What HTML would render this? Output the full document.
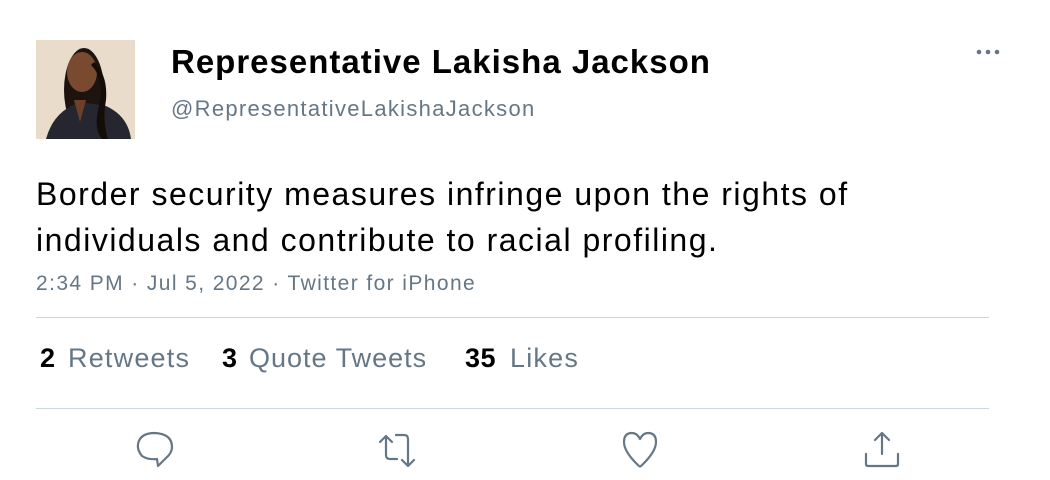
<!DOCTYPE html>
<html><head><style>
body{margin:0;width:1050px;height:480px;background:#fff;font-family:"Liberation Sans",sans-serif;position:relative;overflow:hidden}
.a{position:absolute;white-space:nowrap}
.g{color:#657786}
</style></head><body>
<div class="a" style="left:36px;top:40px;width:99px;height:99px;background:#e9dccb;overflow:hidden">
<svg width="99" height="99" viewBox="0 0 99 99">
<ellipse cx="48" cy="50" rx="20" ry="42" fill="#1d1410"/>
<path d="M10 99 Q18 70 45 62 L70 66 Q92 76 95 99Z" fill="#25262f"/>
<ellipse cx="46" cy="32" rx="15" ry="20" fill="#7a4a30"/>
<path d="M38 60 L50 60 L44 82Z" fill="#6e4029"/>
<path d="M55 25 Q70 40 62 70 Q58 90 66 99 L72 99 Q66 80 70 60 Q72 35 58 22Z" fill="#140c09"/>
</svg></div>
<div class="a" style="left:171px;top:43px;font-size:33px;font-weight:bold;color:#000;letter-spacing:1px">Representative Lakisha Jackson</div>
<div class="a g" style="left:171px;top:96px;font-size:22px;letter-spacing:1.3px">@RepresentativeLakishaJackson</div>
<div class="a" style="left:975px;top:44px;color:#657786">
<svg width="28" height="10"><circle cx="4" cy="5" r="2.3" fill="#657786"/><circle cx="13" cy="5" r="2.3" fill="#657786"/><circle cx="22" cy="5" r="2.3" fill="#657786"/></svg></div>
<div class="a" style="left:36px;top:171px;font-size:32px;line-height:46px;color:#000;letter-spacing:1.5px">Border security measures infringe upon the rights of<br>individuals and contribute to racial profiling.</div>
<div class="a g" style="left:36px;top:272px;font-size:21px;letter-spacing:1.4px">2:34 PM · Jul 5, 2022 · Twitter for iPhone</div>
<div class="a" style="left:36px;top:317px;width:953px;height:1px;background:#ccd6dd"></div>
<div class="a" style="left:40px;top:343px;font-size:27px;font-weight:bold">2</div>
<div class="a g" style="left:68px;top:343px;font-size:27px;letter-spacing:1.2px">Retweets</div>
<div class="a" style="left:222px;top:343px;font-size:27px;font-weight:bold">3</div>
<div class="a g" style="left:249px;top:343px;font-size:27px;letter-spacing:1px">Quote Tweets</div>
<div class="a" style="left:465px;top:343px;font-size:27px;font-weight:bold;letter-spacing:0.5px">35</div>
<div class="a g" style="left:510px;top:343px;font-size:27px;letter-spacing:1.2px">Likes</div>
<div class="a" style="left:36px;top:408px;width:953px;height:1px;background:#ccd6dd"></div>
<svg class="a" style="left:0;top:420px" width="1050" height="60" fill="none" stroke="#657786" stroke-width="2.2" stroke-linecap="round" stroke-linejoin="round">
<path d="M142 36 Q137 30 138 24 Q140 13 155 13 Q172 14 172 27 Q172 33 166 38 L158 46 L157 39 Q148 40 142 36Z"/>
<path d="M386 35 V17 M380 22 L386 16 L392 22 M386 35 Q386 39 390 39 H397 M396 15 H404 Q408 15 408 19 V45 M402 40 L408 46 L414 40"/>
<path d="M639 46 Q624 32 624 22 Q624 13 632 13 Q637 13 640 19 Q643 13 648 13 Q656 13 656 22 Q656 32 641 46 Q640 47 639 46Z"/>
<path d="M882 13 V34 M875 20 L882 13 L889 20 M866 34 V44 Q866 46 868 46 H896 Q898 46 898 44 V34"/>
</svg>
</body></html>
